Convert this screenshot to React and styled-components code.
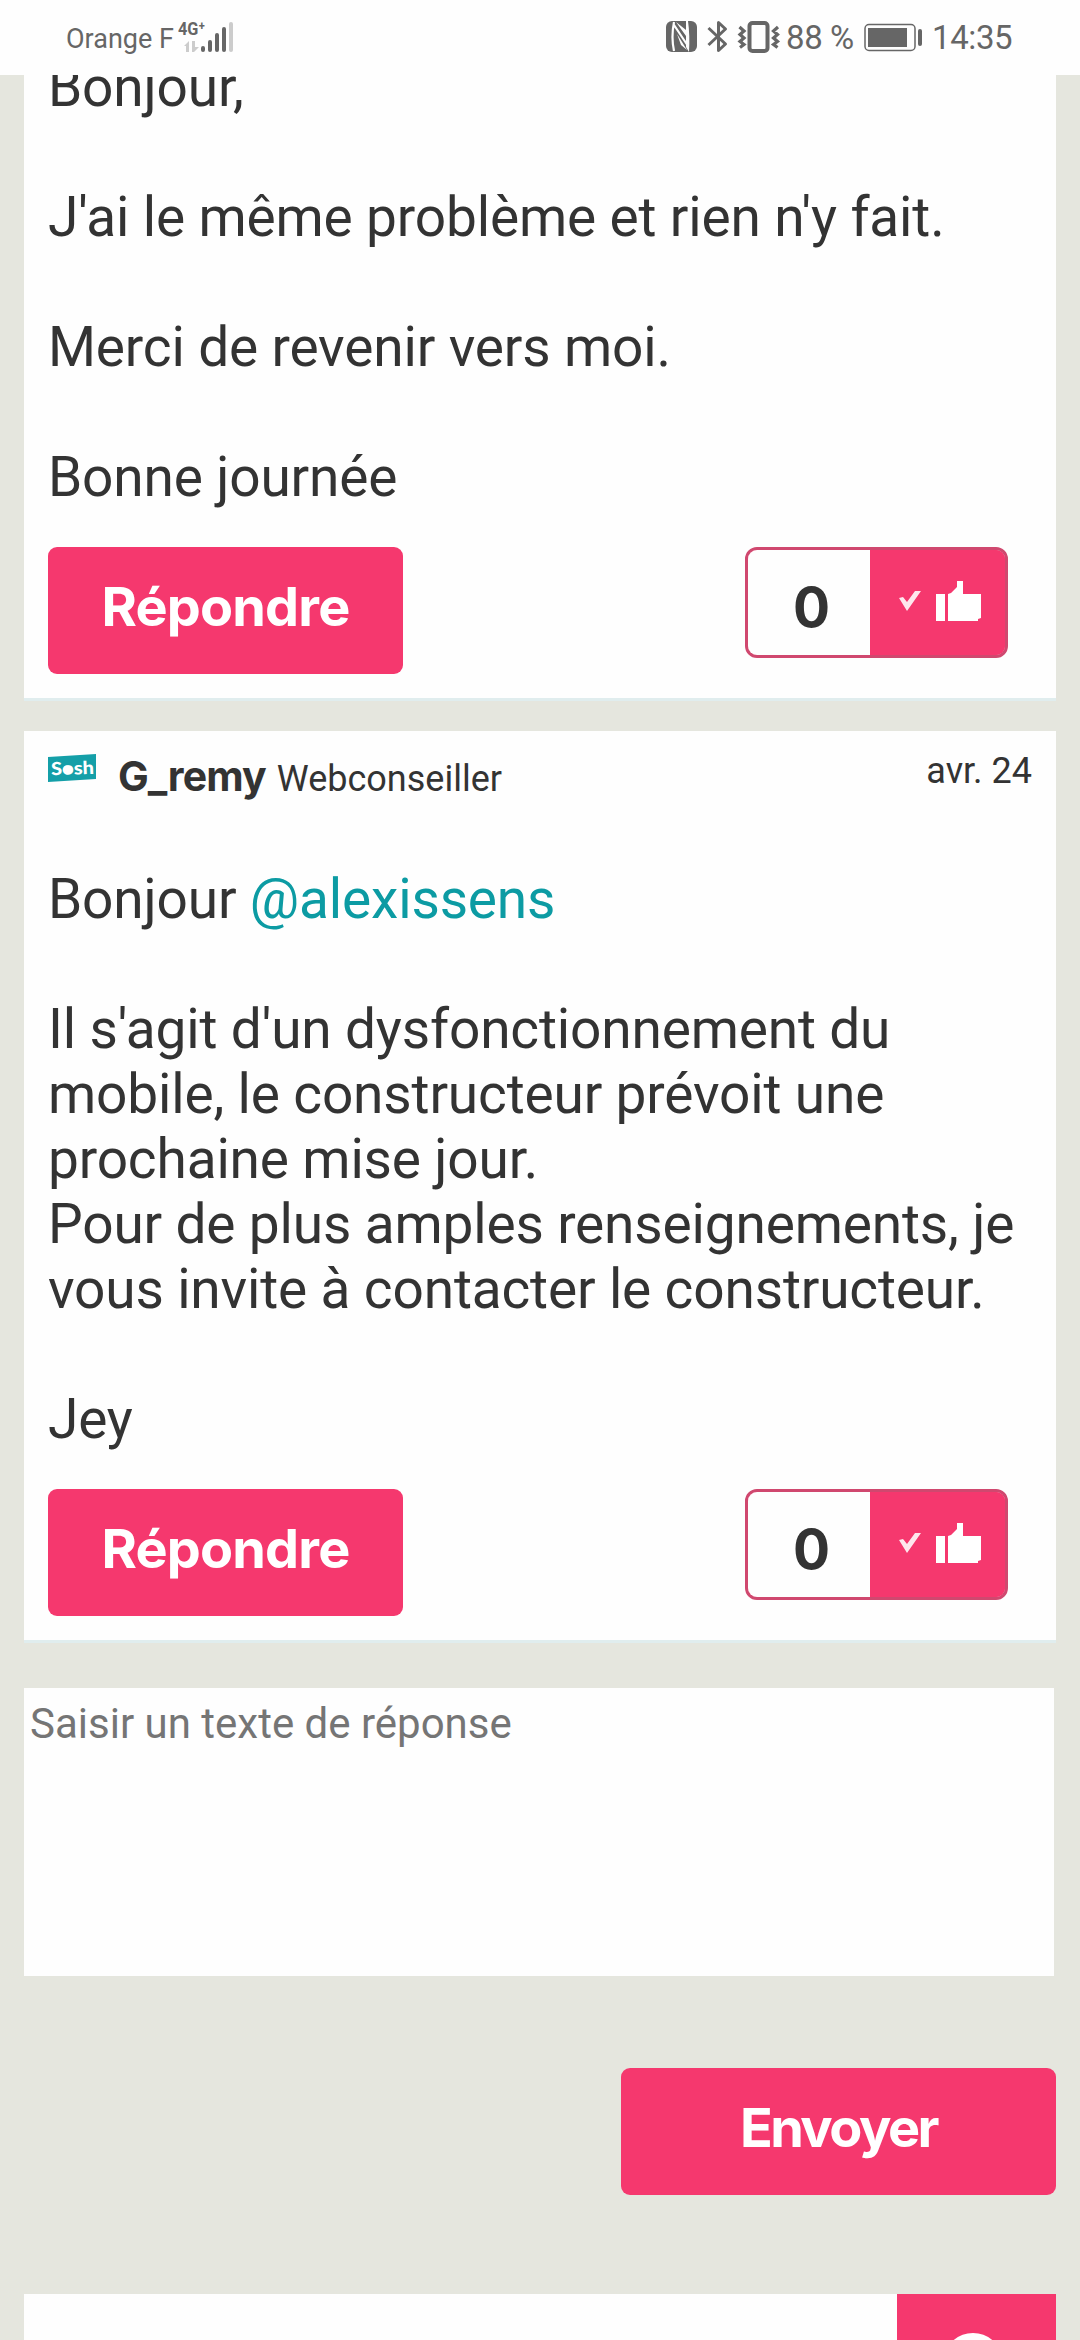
import React from 'react';
import styled, { createGlobalStyle } from 'styled-components';

const PINK = '#f5386e';
const INK = '#333333';
const STATUS = '#666666';

const GlobalStyle = createGlobalStyle`
  * { box-sizing: border-box; }
  body {
    margin: 0;
    background: #e5e6de;
    font-family: Roboto, sans-serif;
    color: ${INK};
  }
`;

const Page = styled.div`
  width: 1080px;
  height: 2340px;
  overflow: hidden;
  display: flex;
  flex-direction: column;
  background: #e5e6de;
`;

const StatusBar = styled.header`
  flex: none;
  height: 75px;
  padding: 0 65px 0 66px;
  display: flex;
  align-items: flex-start;
  background: #fefefe;
  color: ${STATUS};

  svg { display: block; flex: none; }
`;

const Carrier = styled.span`
  width: 112px;
  margin-top: 23px;
  font-size: 27px;
  line-height: 32px;
  white-space: nowrap;
`;

const StatusIcons = styled.div`
  margin-left: auto;
  display: flex;
`;

const StatusText = styled.span`
  width: ${props => props.$width}px;
  margin-top: 18px;
  font-size: 33px;
  line-height: 40px;
  letter-spacing: -0.4px;
  white-space: nowrap;
`;

const Thread = styled.main`
  flex: 1;
  min-height: 0;
  overflow: hidden;
  padding: 0 24px;
`;

const Card = styled.article`
  height: ${props => props.$height}px;
  margin-bottom: ${props => props.$gap}px;
  padding: 0 24px;
  display: flex;
  flex-direction: column;
  background: #fefefe;
  border-bottom: 3px solid #e0edee;
`;

const CardHeader = styled.div`
  flex: none;
  height: 136px;
  padding-top: 22px;
  display: flex;
  align-items: flex-start;
`;

const Author = styled.strong`
  margin: -1px 0 0 22px;
  font: 700 41px/48px Inter, sans-serif;
  letter-spacing: -0.9px;
`;

const Role = styled.span`
  margin: 4px 0 0 11px;
  font-size: 36px;
  line-height: 44px;
`;

const PostDate = styled.time`
  margin: -4px 0 0 auto;
  font-size: 36px;
  line-height: 44px;
`;

const Body = styled.div`
  flex: none;
  margin-top: ${props => props.$shift || 0}px;
  font-size: 55px;
  line-height: 65px;
  letter-spacing: -0.16px;
  white-space: pre-line;
`;

const Mention = styled.a`
  color: #0c9ba3;
`;

const Actions = styled.div`
  flex: none;
  margin-top: auto;
  padding-bottom: 24px;
  display: flex;
  justify-content: space-between;
  align-items: flex-start;
`;

const Button = styled.button`
  width: ${props => props.$width}px;
  height: 127px;
  padding: 0 0 8px;
  border: 0;
  border-radius: 9px;
  background: ${PINK};
  color: #fff;
  font: 700 54px/60px Inter, sans-serif;
  letter-spacing: ${props => props.$tracking}px;
`;

const Kudos = styled.div`
  width: 263px;
  height: 111px;
  margin-right: 24px;
  display: flex;
  border: 3px solid #d0486f;
  border-radius: 12px;
  overflow: hidden;
  background: ${PINK};
  background-clip: padding-box;
`;

const Count = styled.span`
  width: 122px;
  padding: 24px 0 0 5px;
  background: #fefefe;
  text-align: center;
  font: 700 55px/66px Inter, sans-serif;
`;

const Like = styled.span`
  width: 138px;
  margin: -3px -3px -3px 0;
  flex: 1;
  background: ${PINK};
`;

const Editor = styled.textarea`
  display: block;
  width: 1030px;
  height: 288px;
  padding: 12px 6px;
  border: 0;
  resize: none;
  background: #fefefe;
  font: 42px/48px Roboto, sans-serif;

  &::placeholder { color: #757575; }
`;

const SubmitRow = styled.div`
  display: flex;
  justify-content: flex-end;
  padding: 92px 0 99px;
`;

const SearchBar = styled.div`
  height: 100px;
  display: flex;
  justify-content: flex-end;
  background: #fefefe;
`;

const SearchButton = styled.div`
  width: 159px;
  height: 100px;
  background: ${PINK};
`;

const SignalIcon = () => (
  <svg width="60" height="75" viewBox="178 0 60 75">
    <text x="178" y="35" fontFamily="Roboto" fontWeight="700" fontSize="19" textLength="27" lengthAdjust="spacingAndGlyphs" fill={STATUS}>4G⁺</text>
    <path d="M184 46l5-5v11h-3v-6zM192 41h3v6h4l-5 5h-2z" fill="#ccc" />
    <g strokeWidth="4" strokeLinecap="round" stroke={STATUS}>
      <path d="M203 48v2M210 42v8M217 35v15M224 29v21" />
      <path d="M231 24v26" stroke="#ccc" />
    </g>
  </svg>
);

const PhoneIcons = () => (
  <svg width="122" height="75" viewBox="664 0 122 75" fill="none" stroke={STATUS}>
    <rect x="666" y="21" width="31" height="31" rx="6" fill={STATUS} stroke="none" />
    <path d="M674 22q-3 15 0 29M674 25l14 21" stroke="#fefefe" strokeWidth="2.200" />
    <path d="M677 34l10 16-6-5zM676 22l10 14v-6zM686 21h2q2 14 1 31l-3-5z" fill="#fefefe" stroke="none" />
    <path d="M708.500 28l17 16-7 6.500v-28l7 6.500-17 16" strokeWidth="3" strokeLinejoin="round" />
    <rect x="749.500" y="23" width="18" height="28" rx="3" strokeWidth="4" />
    <path d="M739.500 27l4.500 4-4 3.500 4 3.500-4 3.500 4 3-4 3M778 27l-4.500 4 4 3.500-4 3.500 4 3.500-4 3 4 3" strokeWidth="3.200" />
  </svg>
);

const BatteryIcon = () => (
  <svg width="68" height="75" viewBox="864 0 68 75">
    <rect x="865" y="24.500" width="50" height="26" rx="4" fill="none" stroke={STATUS} strokeWidth="1.500" />
    <rect x="868" y="28" width="39" height="19" fill={STATUS} />
    <rect x="918" y="29" width="4" height="17" rx="2" fill={STATUS} />
  </svg>
);

const SoshLogo = () => (
  <svg width="48" height="30" viewBox="0 0 48 30">
    <path d="M0 4L48 1v25L0 29z" fill="#149fa8" />
    <text x="3" y="21.500" fontFamily="Lato" fontWeight="900" fontSize="18" textLength="43" lengthAdjust="spacingAndGlyphs" fill="#fff" transform="rotate(-2 24 15)">Sosh</text>
    <circle cx="19.500" cy="16.500" r="4" fill="#fff" />
  </svg>
);

const LikeIcon = () => (
  <svg width="138" height="111" viewBox="870 547 138 111" fill="#fff">
    <path d="M899 598l4-1 4 5 8-11h6l-14 20z" opacity=".88" />
    <path d="M936 594h9v27h-9zM948 594l3-1 6-6v-6h6v13h18v24l-3 1v2h-30z" />
  </svg>
);

const PostActions = ({ count }) => (
  <Actions>
    <Button $width={355} $tracking={-0.8}>Répondre</Button>
    <Kudos>
      <Count>{count}</Count>
      <Like><LikeIcon /></Like>
    </Kudos>
  </Actions>
);

const App = () => (
  <>
    <GlobalStyle />
    <Page>
      <StatusBar>
        <Carrier>Orange F</Carrier>
        <SignalIcon />
        <StatusIcons>
          <PhoneIcons />
          <StatusText $width={78}>88 %</StatusText>
          <BatteryIcon />
          <StatusText $width={83}>14:35</StatusText>
        </StatusIcons>
      </StatusBar>
      <Thread>
        <Card $height={626} $gap={30}>
          <Body $shift={-20}>
            {`Bonjour,

            J'ai le même problème et rien n'y fait.

            Merci de revenir vers moi.

            Bonne journée`}
          </Body>
          <PostActions count={0} />
        </Card>
        <Card $height={912} $gap={45}>
          <CardHeader>
            <SoshLogo />
            <Author>G_remy</Author>
            <Role>Webconseiller</Role>
            <PostDate>avr. 24</PostDate>
          </CardHeader>
          <Body>
            Bonjour <Mention>@alexissens</Mention>
            {`

            Il s'agit d'un dysfonctionnement du
            mobile, le constructeur prévoit une
            prochaine mise jour.
            Pour de plus amples renseignements, je
            vous invite à contacter le constructeur.

            Jey`}
          </Body>
          <PostActions count={0} />
        </Card>
        <Editor placeholder="Saisir un texte de réponse" />
        <SubmitRow>
          <Button $width={435} $tracking={-2.5}>Envoyer</Button>
        </SubmitRow>
        <SearchBar>
          <SearchButton>
            <svg width="159" height="100" viewBox="0 0 159 100">
              <circle cx="76" cy="69" r="25" fill="none" stroke="#fff" strokeWidth="10" />
            </svg>
          </SearchButton>
        </SearchBar>
      </Thread>
    </Page>
  </>
);

export default App;
